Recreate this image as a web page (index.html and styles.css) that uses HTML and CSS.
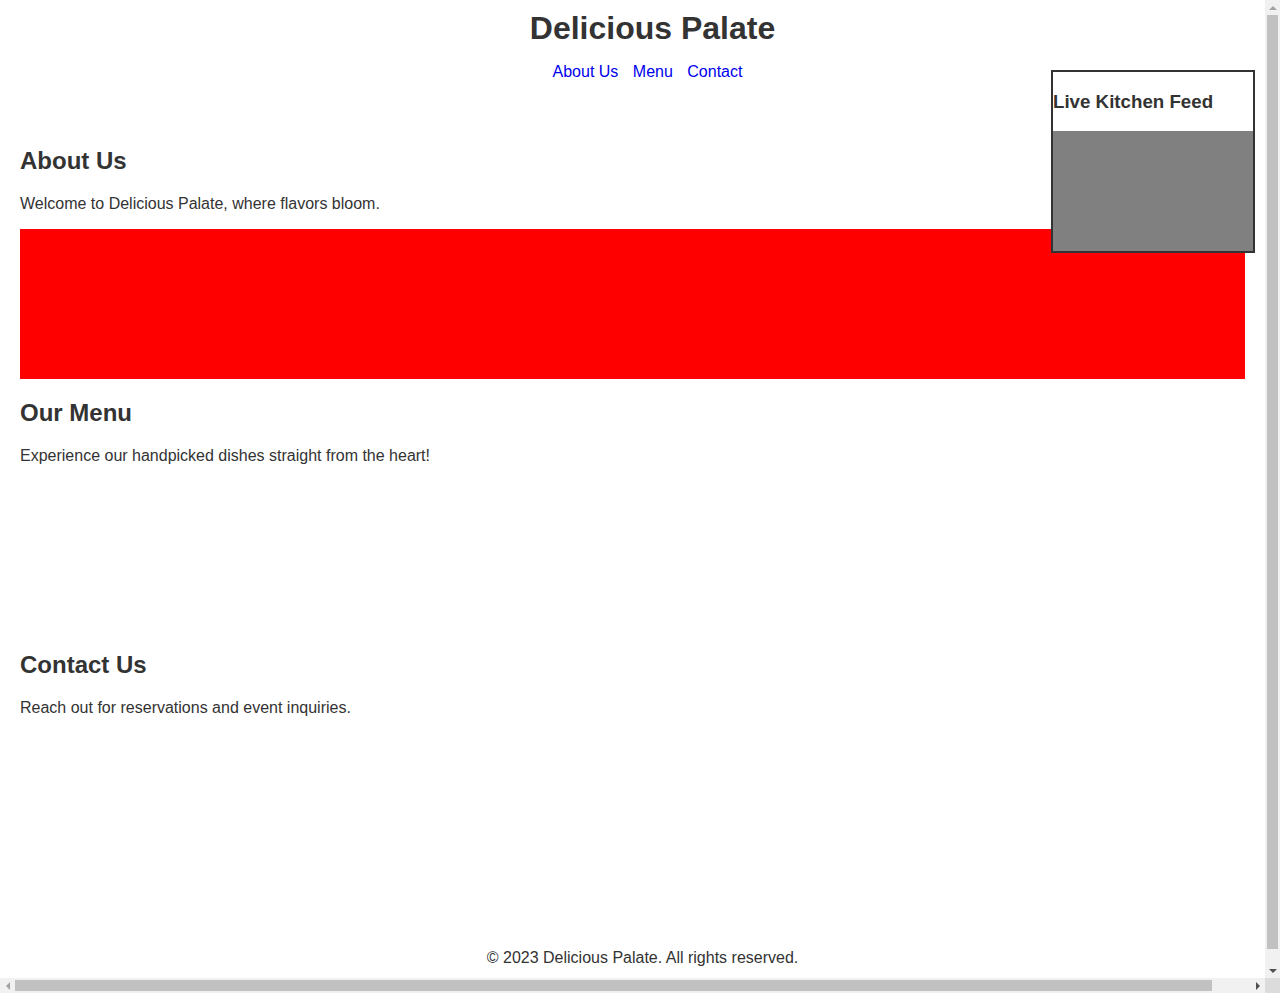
FILE: index.html
```html
<!DOCTYPE html>
<html lang="en">
<head>
<meta charset="utf-8">
<title>Delicious Palate</title>
<link rel="stylesheet" href="styles.css">
</head>
<body>
<div class="page">
  <header class="site-header">
    <h1 class="site-title">Delicious Palate</h1>
    <nav class="site-nav">
      <ul class="nav-list">
        <li class="nav-item"><a class="nav-link" href="#about">About Us</a></li>
        <li class="nav-item"><a class="nav-link" href="#menu">Menu</a></li>
        <li class="nav-item"><a class="nav-link" href="#contact">Contact</a></li>
      </ul>
    </nav>
  </header>
  <main class="content">
    <section class="section" id="about">
      <h2 class="section-title">About Us</h2>
      <p class="section-text">Welcome to Delicious Palate, where flavors bloom.</p>
      <div class="media media-red"></div>
    </section>
    <section class="section" id="menu">
      <h2 class="section-title">Our Menu</h2>
      <p class="section-text">Experience our handpicked dishes straight from the heart!</p>
      <div class="media"></div>
    </section>
    <section class="section" id="contact">
      <h2 class="section-title">Contact Us</h2>
      <p class="section-text">Reach out for reservations and event inquiries.</p>
      <div class="media"></div>
    </section>
  </main>
  <footer class="site-footer">
    <p class="footer-text">&copy; 2023 Delicious Palate. All rights reserved.</p>
  </footer>
</div>
<aside class="feed">
  <h3 class="feed-title">Live Kitchen Feed</h3>
  <div class="feed-video"></div>
</aside>
<div class="sb-v" aria-hidden="true">
  <div class="sb-btn"><span class="sb-arrow sb-up"></span></div>
  <div class="sb-v-track"><div class="sb-v-thumb"></div></div>
  <div class="sb-btn"><span class="sb-arrow sb-down"></span></div>
</div>
<div class="sb-h" aria-hidden="true">
  <div class="sb-btn"><span class="sb-arrow sb-left"></span></div>
  <div class="sb-h-track"><div class="sb-h-thumb"></div></div>
  <div class="sb-btn"><span class="sb-arrow sb-right"></span></div>
</div>
<div class="sb-corner" aria-hidden="true"></div>
</body>
</html>
```

FILE: styles.css
```css
html, body {
  margin: 0;
  padding: 0;
}
body {
  font-family: "Liberation Sans", Arial, sans-serif;
  color: #333;
  background: #fff;
  overflow: hidden;
}
.page {
  width: 1265px;
}
.site-header {
  width: 100%;
  padding: 10px 20px;
  text-align: center;
}
.site-title {
  margin: 0;
  font-size: 32px;
  font-weight: bold;
}
.nav-list {
  list-style: none;
  margin: 16px 0;
  padding: 0;
}
.nav-item {
  display: inline;
}
.nav-link {
  color: #0000ee;
  text-decoration: none;
  margin-right: 10px;
}
.content {
  padding: 20px;
}
.section {
  margin-bottom: 20px;
}
.section-title {
  font-size: 24px;
  margin: 19.92px 0;
}
.section-text {
  font-size: 16px;
  margin: 16px 0;
}
.media {
  height: 150px;
}
.media-red {
  background: #ff0000;
}
.feed {
  position: fixed;
  top: 70px;
  right: 25px;
  width: 200px;
  border: 2px solid #333;
  background: #fff;
}
.feed-title {
  font-size: 18.72px;
  margin: 18.72px 0;
}
.feed-video {
  height: 120px;
  background: #808080;
}
.site-footer {
  width: 100%;
  padding: 10px;
  text-align: center;
}
.footer-text {
  margin: 16px 0;
}

/* scrollbars as shown in the reference */
.sb-v {
  position: fixed;
  top: 0;
  right: 0;
  width: 15px;
  height: 978px;
  background: #f1f1f1;
}
.sb-h {
  position: fixed;
  left: 0;
  bottom: 0;
  width: 1265px;
  height: 15px;
  background: #f1f1f1;
  display: flex;
}
.sb-btn {
  width: 15px;
  height: 15px;
  flex: none;
  display: flex;
  align-items: center;
  justify-content: center;
}
.sb-v-track {
  height: 948px;
  padding: 0 2px;
}
.sb-v-thumb {
  width: 11px;
  height: 934px;
  background: #c1c1c1;
}
.sb-h-track {
  flex: 1;
  padding: 2px 0;
}
.sb-h-thumb {
  height: 11px;
  width: 1197px;
  background: #c1c1c1;
}
.sb-corner {
  position: fixed;
  right: 0;
  bottom: 0;
  width: 15px;
  height: 15px;
  background: #dcdcdc;
}
.sb-arrow {
  width: 0;
  height: 0;
}
.sb-up {
  border-left: 4px solid transparent;
  border-right: 4px solid transparent;
  border-bottom: 4px solid #a3a3a3;
}
.sb-down {
  border-left: 4px solid transparent;
  border-right: 4px solid transparent;
  border-top: 4px solid #505050;
}
.sb-left {
  border-top: 4px solid transparent;
  border-bottom: 4px solid transparent;
  border-right: 4px solid #a3a3a3;
}
.sb-right {
  border-top: 4px solid transparent;
  border-bottom: 4px solid transparent;
  border-left: 4px solid #505050;
}
```
